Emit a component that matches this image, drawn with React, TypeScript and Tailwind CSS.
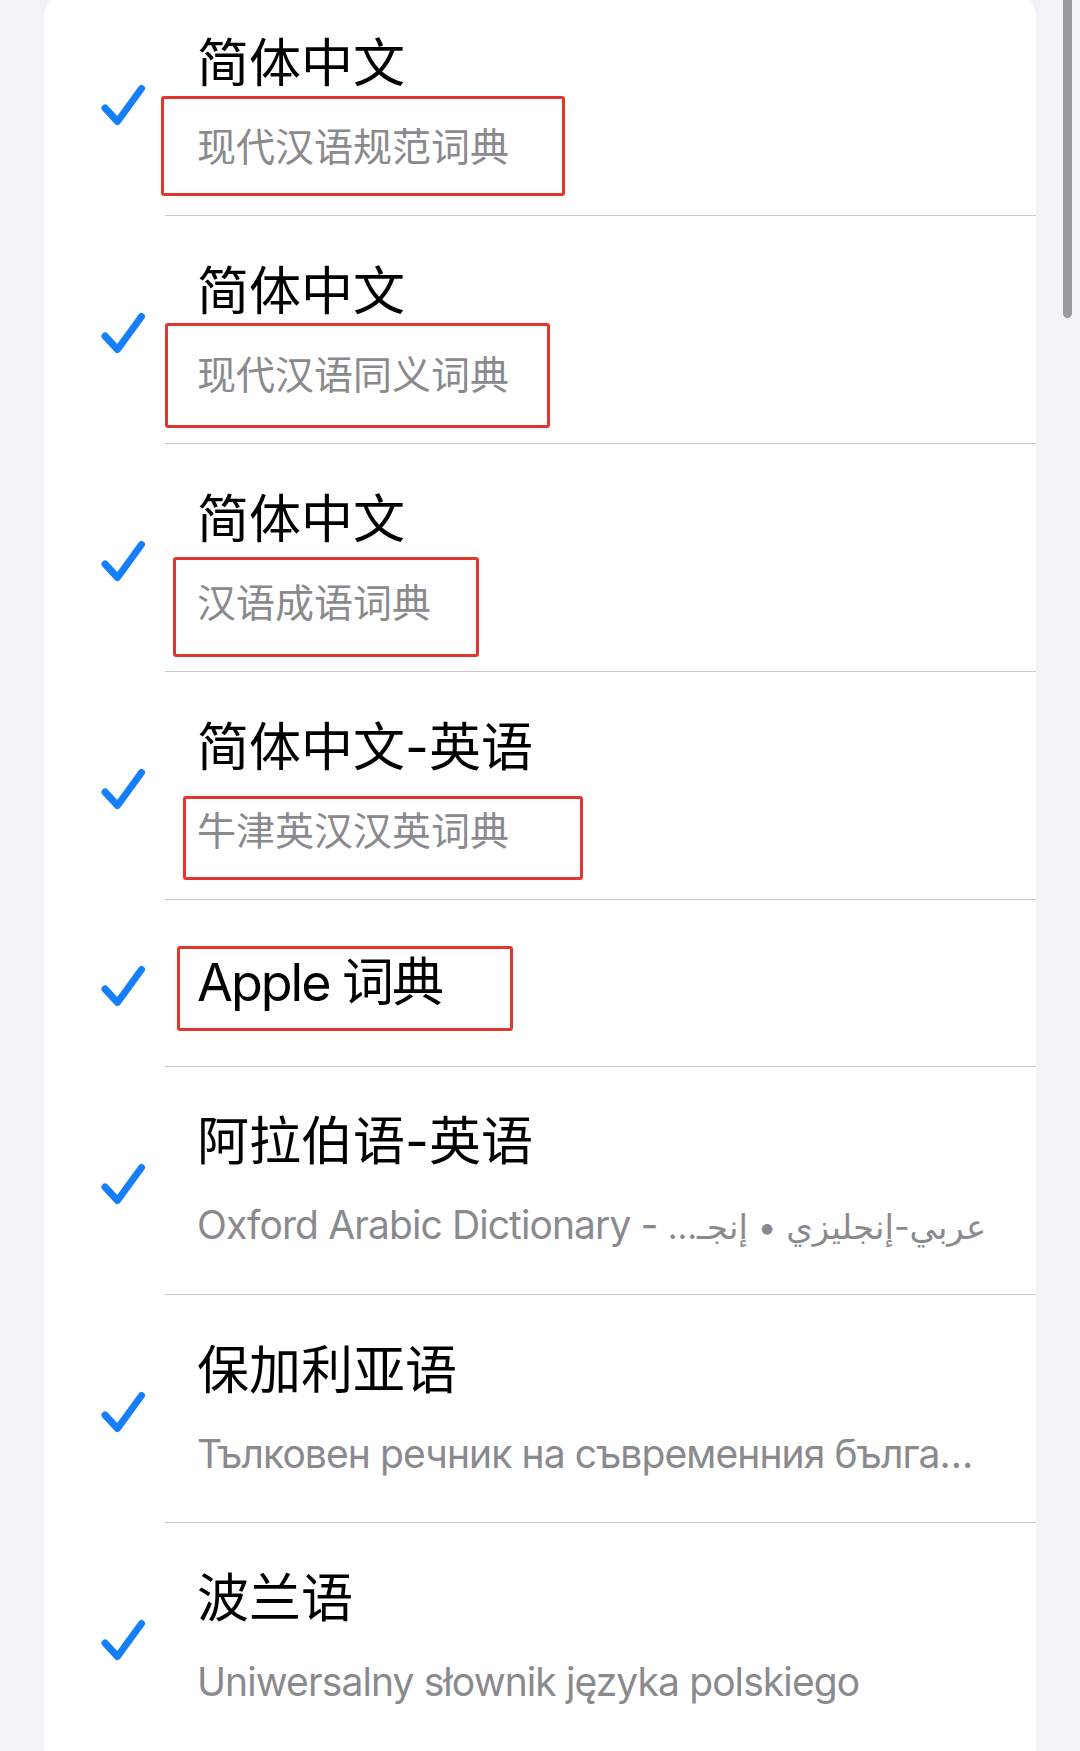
import React from 'react';

type Row = {
  title: string;
  sub?: React.ReactNode;
  // latin subtitles are set a touch tighter
  latin?: boolean;
  // red outline drawn over the row, positioned within the row
  box?: string;
};

const rows: Row[] = [
  {
    title: '简体中文',
    sub: '现代汉语规范词典',
    box: 'left-[117px] top-[108px] w-[404px] h-[100px]',
  },
  {
    title: '简体中文',
    sub: '现代汉语同义词典',
    box: 'left-[121px] top-[107px] w-[385px] h-[105px]',
  },
  {
    title: '简体中文',
    sub: '汉语成语词典',
    box: 'left-[129px] top-[113px] w-[306px] h-[100px]',
  },
  {
    title: '简体中文-英语',
    sub: '牛津英汉汉英词典',
    box: 'left-[139px] top-[124px] w-[400px] h-[84px]',
  },
  {
    title: 'Apple 词典',
    box: 'left-[133px] top-[46px] w-[336px] h-[85px]',
  },
  {
    title: '阿拉伯语-英语',
    latin: true,
    sub: (
      <>
        Oxford Arabic Dictionary -{' '}
        <span dir="rtl" className="text-[34px] tracking-normal">
          عربي-إنجليزي • إنجـ…
        </span>
      </>
    ),
  },
  {
    title: '保加利亚语',
    latin: true,
    sub: 'Тълковен речник на съвременния бълга…',
  },
  {
    title: '波兰语',
    latin: true,
    sub: 'Uniwersalny słownik języka polskiego',
  },
];

function Check() {
  return (
    <svg width="47" height="44" viewBox="0 0 47 44" fill="none">
      <path
        d="M5 25 L17.5 38.5 L41.5 5.5"
        stroke="#157efb"
        strokeWidth="7"
        strokeLinecap="round"
        strokeLinejoin="round"
      />
    </svg>
  );
}

export default function App() {
  return (
    <div className="relative h-[1751px] overflow-hidden bg-[#f2f2f7] font-['Inter','Noto_Sans_CJK_SC','DejaVu_Sans',sans-serif]">
      <div className="mx-[44px] -mt-[12px] rounded-[30px] bg-white pb-[80px]">
        {rows.map((row, i) => (
          <div key={i}>
            <div
              className={`relative flex items-center pl-[56px] ${
                row.sub ? 'h-[227px]' : 'h-[166px]'
              }`}
            >
              <div className="w-[97px] shrink-0 pt-[6px]">
                <Check />
              </div>
              <div className="min-w-0 flex-1 pr-[40px]">
                <div
                  className={`text-[52px] leading-[60px] text-black ${
                    row.sub ? '' : 'tracking-[-2px]'
                  }`}
                >
                  {row.title}
                </div>
                {row.sub && (
                  <div
                    className={`mt-[30px] whitespace-nowrap text-[39px] leading-[46px] text-[#8a8a8e] ${
                      row.latin ? 'tracking-[-0.9px]' : ''
                    }`}
                  >
                    {row.sub}
                  </div>
                )}
              </div>
              {row.box && (
                <div
                  className={`absolute rounded-[3px] border-[3px] border-[#e5352f] ${row.box}`}
                />
              )}
            </div>
            {i < rows.length - 1 && <div className="ml-[121px] h-px bg-[#c8c7cc]" />}
          </div>
        ))}
      </div>

      {/* scroll indicator */}
      <div className="absolute -top-[10px] right-[8px] h-[328px] w-[9px] rounded-full bg-[#98989e]" />
    </div>
  );
}
